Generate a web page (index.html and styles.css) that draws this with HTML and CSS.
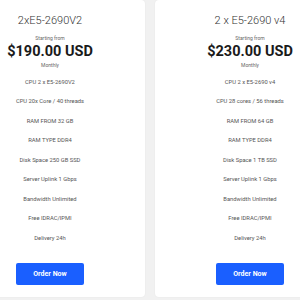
FILE: index.html
```html
<!DOCTYPE html>
<html lang="en">
<head>
    <meta charset="UTF-8">
    <title>Dedicated servers</title>
    <link rel="stylesheet" href="styles.css">
</head>
<body>
<div class="plans">
    <div class="plan">
        <h3 class="name">2xE5-2690V2</h3>
        <p class="from">Starting from</p>
        <div class="price">$190.00 USD</div>
        <p class="cycle">Monthly</p>
        <ul class="features">
            <li>CPU 2 x E5-2690V2</li>
            <li>CPU 20x Core / 40 threads</li>
            <li>RAM FROM 32 GB</li>
            <li>RAM TYPE DDR4</li>
            <li>Disk Space 250 GB SSD</li>
            <li>Server Uplink 1 Gbps</li>
            <li>Bandwidth Unlimited</li>
            <li>Free IDRAC/IPMI</li>
            <li>Delivery 24h</li>
        </ul>
        <a class="btn" href="#">Order Now</a>
    </div>
    <div class="plan">
        <h3 class="name">2 x E5-2690 v4</h3>
        <p class="from">Starting from</p>
        <div class="price">$230.00 USD</div>
        <p class="cycle">Monthly</p>
        <ul class="features">
            <li>CPU 2 x E5-2690 v4</li>
            <li>CPU 28 cores / 56 threads</li>
            <li>RAM FROM 64 GB</li>
            <li>RAM TYPE DDR4</li>
            <li>Disk Space 1 TB SSD</li>
            <li>Server Uplink 1 Gbps</li>
            <li>Bandwidth Unlimited</li>
            <li>Free IDRAC/IPMI</li>
            <li>Delivery 24h</li>
        </ul>
        <a class="btn" href="#">Order Now</a>
    </div>
</div>
</body>
</html>
```

FILE: styles.css
```css
*{
    margin: 0;
    padding: 0;
    list-style: none;
    box-sizing: border-box;
}
html,body{
    width: 100%;
    height: 100%;
}
body{
    background: #f1f1f1;
    font-family: Roboto, "Liberation Sans", sans-serif;
    overflow: hidden;
}
.plans{
    display: flex;
    gap: 10px;
    margin-left: -45px;
}
.plan{
    flex: 0 0 190px;
    height: 297px;
    background: #fff;
    border-radius: 4px;
    box-shadow: 0 0 2px rgba(0,0,0,.06);
    display: flex;
    flex-direction: column;
    align-items: center;
    padding-top: 14px;
    text-align: center;
}
.plan .name{
    font-size: 11px;
    line-height: 14px;
    font-weight: 300;
    color: #333;
}
.plan .from{
    margin-top: 6px;
    font-size: 5px;
    line-height: 8px;
    color: #666;
}
.plan .price{
    margin-top: 0.5px;
    font-size: 14.5px;
    line-height: 18px;
    font-weight: 700;
    color: #1a1a1a;
}
.plan .cycle{
    font-size: 5px;
    line-height: 8px;
    color: #666;
}
.plan .features{
    margin-top: 4px;
}
.plan .features li{
    font-size: 5.8px;
    line-height: 19.5px;
    color: #555;
}
.plan .btn{
    margin-top: 15px;
    width: 68px;
    height: 22px;
    line-height: 22px;
    background: #1a5fff;
    border-radius: 2px;
    color: #fff;
    font-size: 7px;
    font-weight: 700;
    text-decoration: none;
}
```
